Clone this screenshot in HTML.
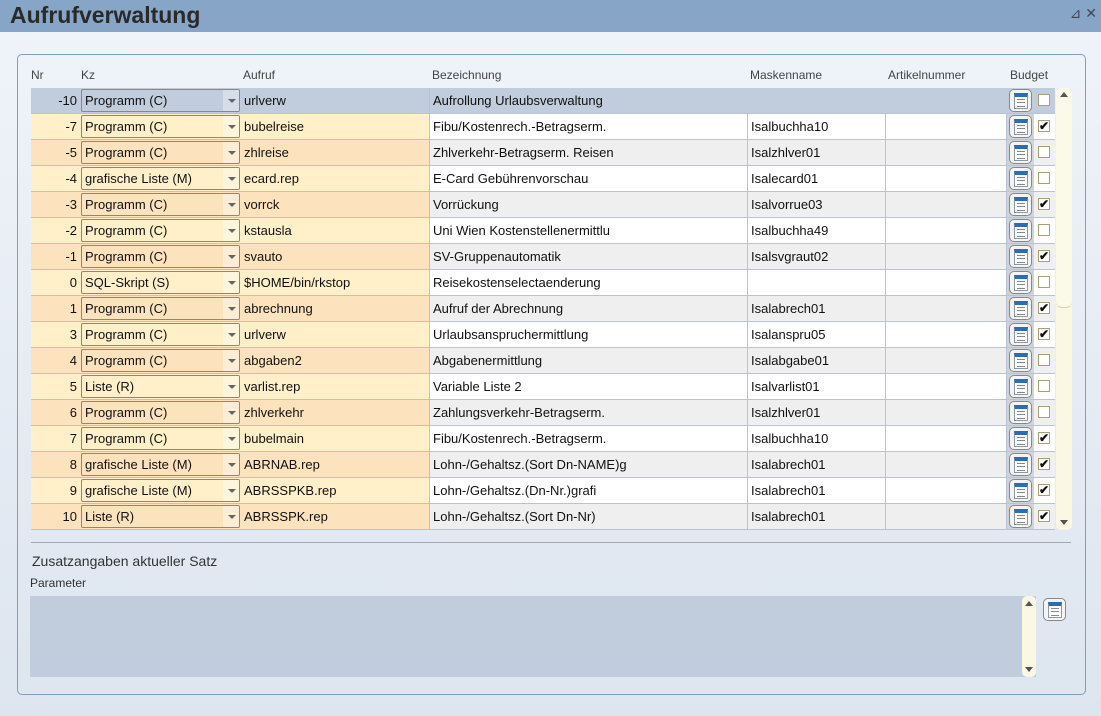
<!DOCTYPE html>
<html><head><meta charset="utf-8"><style>
*{box-sizing:border-box;margin:0;padding:0}
body{width:1101px;height:716px;overflow:hidden;font-family:"Liberation Sans",sans-serif;background:linear-gradient(#f0f4fa,#dde5ef);position:relative}
.title{position:absolute;left:0;top:0;width:1101px;height:32px;background:#87a5c7}
.title h1{position:absolute;left:10px;top:2px;font-size:23px;font-weight:bold;color:#2a2a2a}
.ctl{position:absolute;right:4px;top:5px;color:#445;font-size:14px}
.panel{position:absolute;left:17px;top:54px;width:1069px;height:641px;border:1px solid #7f9fbf;border-radius:5px}
.hd{position:absolute;top:68px;font-size:12px;color:#444}
.row{position:absolute;left:31px;width:1024px;height:26px;border-bottom:1px solid #b8c4d2;font-size:13px;color:#111}
.c{position:absolute;top:0;height:25px;line-height:25px;border-right:1px solid #b8c4d2;padding-left:3px;white-space:nowrap;overflow:hidden}
.nr{left:0;width:48px;text-align:right;padding-right:2px;border-right:none}
.kz{left:48px;width:162px;border-right:none}
.sel{position:absolute;left:2px;top:1px;width:159px;height:23px;border:1px solid #888;border-radius:2px;line-height:21px;padding-left:3px}
.sel:after{content:"";position:absolute;right:3px;top:9px;border:4px solid transparent;border-top:4px solid #666}
.sel b{position:absolute;right:0;top:0;width:16px;height:21px;background:rgba(255,255,255,.35)}
.au{left:210px;width:189px;padding-left:3px}
.bz{left:399px;width:318px}
.mn{left:717px;width:138px}
.an{left:855px;width:121px}
.bi{left:976px;width:27px;background:#cfd4db;border-right:none;padding:0}
.cb{left:1003px;width:21px;border-right:none;padding:0}
.ic{position:absolute;left:2px;top:1px;width:23px;height:23px;border:1px solid #888;border-radius:5px;background:#f4f4f4}
.ic i{position:absolute;left:4px;top:3px;width:14px;height:16px;background:#fff;border:1px solid #8899aa;border-top:4px solid #2a6db5}
.ic i:after{content:"";position:absolute;left:2px;top:2px;width:8px;height:6px;border-top:1px solid #888;border-bottom:1px solid #888}
.ic i:before{content:"";position:absolute;left:2px;top:5px;width:8px;height:0;border-top:1px solid #888}
.box{position:absolute;left:4px;top:6px;width:12px;height:12px;border:1px solid #aaa078;background:#fff;font-size:12px;line-height:11px;text-align:center;font-weight:bold;color:#111}
.sb{position:absolute;left:1056px;top:88px;width:16px;height:442px;background:#faf7e2;border-radius:6px}
</style></head><body>
<div class="title"><h1>Aufrufverwaltung</h1><span class="ctl">⊿ ✕</span></div>
<div class="panel"></div>
<div class="hd" style="left:31px">Nr</div>
<div class="hd" style="left:81px">Kz</div>
<div class="hd" style="left:243px">Aufruf</div>
<div class="hd" style="left:432px">Bezeichnung</div>
<div class="hd" style="left:750px">Maskenname</div>
<div class="hd" style="left:888px">Artikelnummer</div>
<div class="hd" style="left:1010px">Budget</div>

<div class="row" style="top:88px;background:#c1cddd"><div class="c nr">-10</div><div class="c kz"><div class="sel" style="background:#c1cddd">Programm (C)<b></b></div></div><div class="c au">urlverw</div><div class="c bz" style="border-right:none">Aufrollung Urlaubsverwaltung</div><div class="c mn" style="border-right:none"></div><div class="c an" style="border-right:none"></div><div class="c bi" style="background:#c1cddd"><div class="ic"><i></i></div></div><div class="c cb"><div class="box"></div></div></div>
<div class="row" style="top:114px;background:#fff0c9"><div class="c nr">-7</div><div class="c kz"><div class="sel">Programm (C)<b></b></div></div><div class="c au">bubelreise</div><div class="c bz" style="background:#fff">Fibu/Kostenrech.-Betragserm.</div><div class="c mn" style="background:#fff">Isalbuchha10</div><div class="c an" style="background:#fff"></div><div class="c bi"><div class="ic"><i></i></div></div><div class="c cb" style="background:#fff"><div class="box">✔</div></div></div>
<div class="row" style="top:140px;background:#fde3bd"><div class="c nr">-5</div><div class="c kz"><div class="sel">Programm (C)<b></b></div></div><div class="c au">zhlreise</div><div class="c bz" style="background:#efefef">Zhlverkehr-Betragserm. Reisen</div><div class="c mn" style="background:#efefef">Isalzhlver01</div><div class="c an" style="background:#efefef"></div><div class="c bi"><div class="ic"><i></i></div></div><div class="c cb" style="background:#efefef"><div class="box"></div></div></div>
<div class="row" style="top:166px;background:#fff0c9"><div class="c nr">-4</div><div class="c kz"><div class="sel">grafische Liste (M)<b></b></div></div><div class="c au">ecard.rep</div><div class="c bz" style="background:#fff">E-Card Gebührenvorschau</div><div class="c mn" style="background:#fff">Isalecard01</div><div class="c an" style="background:#fff"></div><div class="c bi"><div class="ic"><i></i></div></div><div class="c cb" style="background:#fff"><div class="box"></div></div></div>
<div class="row" style="top:192px;background:#fde3bd"><div class="c nr">-3</div><div class="c kz"><div class="sel">Programm (C)<b></b></div></div><div class="c au">vorrck</div><div class="c bz" style="background:#efefef">Vorrückung</div><div class="c mn" style="background:#efefef">Isalvorrue03</div><div class="c an" style="background:#efefef"></div><div class="c bi"><div class="ic"><i></i></div></div><div class="c cb" style="background:#efefef"><div class="box">✔</div></div></div>
<div class="row" style="top:218px;background:#fff0c9"><div class="c nr">-2</div><div class="c kz"><div class="sel">Programm (C)<b></b></div></div><div class="c au">kstausla</div><div class="c bz" style="background:#fff">Uni Wien Kostenstellenermittlu</div><div class="c mn" style="background:#fff">Isalbuchha49</div><div class="c an" style="background:#fff"></div><div class="c bi"><div class="ic"><i></i></div></div><div class="c cb" style="background:#fff"><div class="box"></div></div></div>
<div class="row" style="top:244px;background:#fde3bd"><div class="c nr">-1</div><div class="c kz"><div class="sel">Programm (C)<b></b></div></div><div class="c au">svauto</div><div class="c bz" style="background:#efefef">SV-Gruppenautomatik</div><div class="c mn" style="background:#efefef">Isalsvgraut02</div><div class="c an" style="background:#efefef"></div><div class="c bi"><div class="ic"><i></i></div></div><div class="c cb" style="background:#efefef"><div class="box">✔</div></div></div>
<div class="row" style="top:270px;background:#fff0c9"><div class="c nr">0</div><div class="c kz"><div class="sel">SQL-Skript (S)<b></b></div></div><div class="c au">$HOME/bin/rkstop</div><div class="c bz" style="background:#fff">Reisekostenselectaenderung</div><div class="c mn" style="background:#fff"></div><div class="c an" style="background:#fff"></div><div class="c bi"><div class="ic"><i></i></div></div><div class="c cb" style="background:#fff"><div class="box"></div></div></div>
<div class="row" style="top:296px;background:#fde3bd"><div class="c nr">1</div><div class="c kz"><div class="sel">Programm (C)<b></b></div></div><div class="c au">abrechnung</div><div class="c bz" style="background:#efefef">Aufruf der Abrechnung</div><div class="c mn" style="background:#efefef">Isalabrech01</div><div class="c an" style="background:#efefef"></div><div class="c bi"><div class="ic"><i></i></div></div><div class="c cb" style="background:#efefef"><div class="box">✔</div></div></div>
<div class="row" style="top:322px;background:#fff0c9"><div class="c nr">3</div><div class="c kz"><div class="sel">Programm (C)<b></b></div></div><div class="c au">urlverw</div><div class="c bz" style="background:#fff">Urlaubsanspruchermittlung</div><div class="c mn" style="background:#fff">Isalanspru05</div><div class="c an" style="background:#fff"></div><div class="c bi"><div class="ic"><i></i></div></div><div class="c cb" style="background:#fff"><div class="box">✔</div></div></div>
<div class="row" style="top:348px;background:#fde3bd"><div class="c nr">4</div><div class="c kz"><div class="sel">Programm (C)<b></b></div></div><div class="c au">abgaben2</div><div class="c bz" style="background:#efefef">Abgabenermittlung</div><div class="c mn" style="background:#efefef">Isalabgabe01</div><div class="c an" style="background:#efefef"></div><div class="c bi"><div class="ic"><i></i></div></div><div class="c cb" style="background:#efefef"><div class="box"></div></div></div>
<div class="row" style="top:374px;background:#fff0c9"><div class="c nr">5</div><div class="c kz"><div class="sel">Liste (R)<b></b></div></div><div class="c au">varlist.rep</div><div class="c bz" style="background:#fff">Variable Liste 2</div><div class="c mn" style="background:#fff">Isalvarlist01</div><div class="c an" style="background:#fff"></div><div class="c bi"><div class="ic"><i></i></div></div><div class="c cb" style="background:#fff"><div class="box"></div></div></div>
<div class="row" style="top:400px;background:#fde3bd"><div class="c nr">6</div><div class="c kz"><div class="sel">Programm (C)<b></b></div></div><div class="c au">zhlverkehr</div><div class="c bz" style="background:#efefef">Zahlungsverkehr-Betragserm.</div><div class="c mn" style="background:#efefef">Isalzhlver01</div><div class="c an" style="background:#efefef"></div><div class="c bi"><div class="ic"><i></i></div></div><div class="c cb" style="background:#efefef"><div class="box"></div></div></div>
<div class="row" style="top:426px;background:#fff0c9"><div class="c nr">7</div><div class="c kz"><div class="sel">Programm (C)<b></b></div></div><div class="c au">bubelmain</div><div class="c bz" style="background:#fff">Fibu/Kostenrech.-Betragserm.</div><div class="c mn" style="background:#fff">Isalbuchha10</div><div class="c an" style="background:#fff"></div><div class="c bi"><div class="ic"><i></i></div></div><div class="c cb" style="background:#fff"><div class="box">✔</div></div></div>
<div class="row" style="top:452px;background:#fde3bd"><div class="c nr">8</div><div class="c kz"><div class="sel">grafische Liste (M)<b></b></div></div><div class="c au">ABRNAB.rep</div><div class="c bz" style="background:#efefef">Lohn-/Gehaltsz.(Sort Dn-NAME)g</div><div class="c mn" style="background:#efefef">Isalabrech01</div><div class="c an" style="background:#efefef"></div><div class="c bi"><div class="ic"><i></i></div></div><div class="c cb" style="background:#efefef"><div class="box">✔</div></div></div>
<div class="row" style="top:478px;background:#fff0c9"><div class="c nr">9</div><div class="c kz"><div class="sel">grafische Liste (M)<b></b></div></div><div class="c au">ABRSSPKB.rep</div><div class="c bz" style="background:#fff">Lohn-/Gehaltsz.(Dn-Nr.)grafi</div><div class="c mn" style="background:#fff">Isalabrech01</div><div class="c an" style="background:#fff"></div><div class="c bi"><div class="ic"><i></i></div></div><div class="c cb" style="background:#fff"><div class="box">✔</div></div></div>
<div class="row" style="top:504px;background:#fde3bd"><div class="c nr">10</div><div class="c kz"><div class="sel">Liste (R)<b></b></div></div><div class="c au">ABRSSPK.rep</div><div class="c bz" style="background:#efefef">Lohn-/Gehaltsz.(Sort Dn-Nr)</div><div class="c mn" style="background:#efefef">Isalabrech01</div><div class="c an" style="background:#efefef"></div><div class="c bi"><div class="ic"><i></i></div></div><div class="c cb" style="background:#efefef"><div class="box">✔</div></div></div>

<div class="sb"><div style="position:absolute;left:0;top:0;width:16px;height:220px;border-bottom:1px solid #d8d0a0;border-radius:6px;background:#fbf9e8"></div><div style="position:absolute;left:4px;top:4px;border:4px solid transparent;border-bottom:5px solid #555;border-top:none"></div><div style="position:absolute;left:4px;top:432px;border:4px solid transparent;border-top:5px solid #555;border-bottom:none"></div></div>

<div style="position:absolute;left:31px;top:542px;width:1040px;height:1px;background:#a0a8b0"></div>
<div style="position:absolute;left:32px;top:553px;font-size:14px;color:#333">Zusatzangaben aktueller Satz</div>
<div style="position:absolute;left:30px;top:576px;font-size:12px;color:#333">Parameter</div>
<div style="position:absolute;left:30px;top:596px;width:1006px;height:81px;background:#c1cddd"></div>
<div style="position:absolute;left:1022px;top:596px;width:14px;height:81px;background:#faf7e2;border-radius:5px"><div style="position:absolute;left:3px;top:5px;border:4px solid transparent;border-bottom:5px solid #555;border-top:none"></div><div style="position:absolute;left:3px;top:71px;border:4px solid transparent;border-top:5px solid #555;border-bottom:none"></div></div>
<div class="ic" style="left:1043px;top:598px;background:#f4f4f4"><i></i></div>
</body></html>
